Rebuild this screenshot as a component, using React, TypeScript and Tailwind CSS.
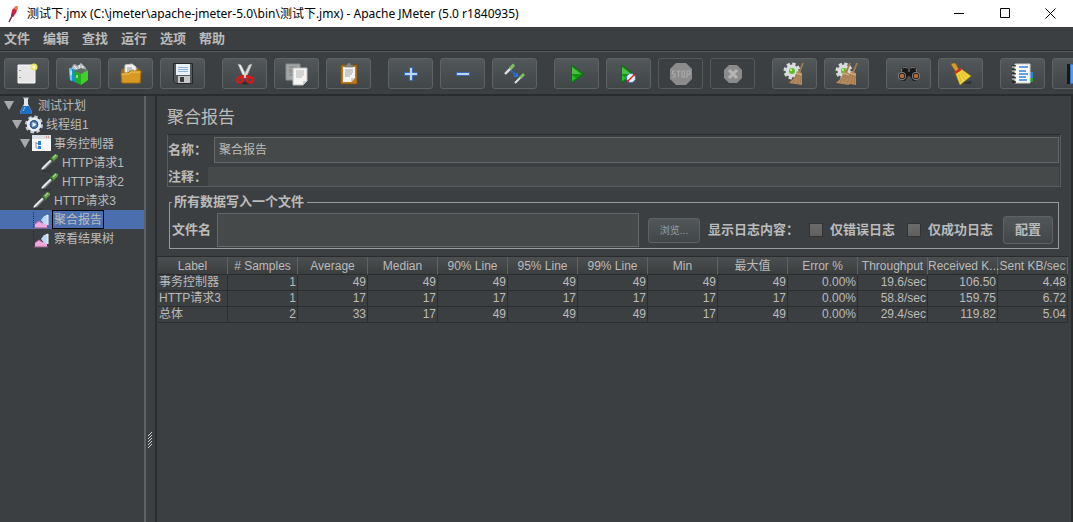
import { useState } from "react";
import type { ReactNode } from "react";
import clsx from "clsx";

/* ---------- toolbar icons ---------- */

function Icon({ children }: { children: ReactNode }) {
  return (
    <svg viewBox="0 0 24 24" className="size-6" aria-hidden="true">
      {children}
    </svg>
  );
}

const NewIcon = () => (
  <Icon>
    <path d="M3 3h17v18H3z" fill="#e6e6e6" stroke="#fafafa" />
    <path d="M5 8v1M5 15v1" stroke="#555" />
    <circle cx="19" cy="5" r="3.500" fill="#efe36a" />
    <circle cx="19" cy="5" r="1.500" fill="#fffde0" />
  </Icon>
);

const TemplatesIcon = () => (
  <Icon>
    <path d="M4 7l3-5 4 2 3-3 4 4 2 4-8 3z" fill="#b9bfc2" stroke="#8b9296" />
    <path d="M7 4l3 3M12 3l1 4M16 4l-1 4" stroke="#eef1f2" />
    <path d="M2 6l8 2v13l-7-3z" fill="#1592d8" />
    <path d="M2 6l3 1v12l-2-1z" fill="#6cc6f4" />
    <path d="M7 9l7 3v11l-6-3z" fill="#1fae1f" />
    <path d="M14 12l7-4v10l-7 5z" fill="#43cf2a" />
    <path d="M7 9l7-3 7 2-7 4z" fill="#5f6b62" />
    <path d="M4 9v4M10 13v3" stroke="#fff" />
  </Icon>
);

const OpenIcon = () => (
  <Icon>
    <path d="M2 8l3-2h14l2 2v12H2z" fill="#a36f10" />
    <path d="M6 3l7-1 4 3v9H6z" fill="#f3f3f3" stroke="#c9c9c9" />
    <path d="M8 6h5M8 8h7M8 10h7" stroke="#8e8e8e" />
    <path d="M2 11h7l2-2h11l-1 12H3z" fill="#d89a22" stroke="#a8720f" />
    <path d="M3 12h7l2-2h9" stroke="#f3c763" fill="none" />
  </Icon>
);

const SaveIcon = () => (
  <Icon>
    <path d="M2.500 1.500h19v20h-17l-2-2z" fill="#55585b" stroke="#242627" />
    <path d="M5 2h14v11H5z" fill="#e8f1fa" />
    <path d="M7 5.500h10M7 7.500h10M7 9.500h10" stroke="#8eb0d5" />
    <path d="M7 14h12v7H7z" fill="#c6c7c8" />
    <path d="M9 15h4v5H9z" fill="#393b3d" />
  </Icon>
);

const CutIcon = () => (
  <Icon>
    <ellipse cx="12" cy="21" rx="7" ry="1.500" fill="#2c2f30" />
    <path d="M5 2l3 1 6 12-3 1z" fill="#f3f3f3" stroke="#a9a9a9" strokeWidth=".6" />
    <path d="M19 2l-3 1-6 12 3 1z" fill="#dcdcdc" stroke="#a9a9a9" strokeWidth=".6" />
    <path d="M11 14l-4 1M13 14l4 1" stroke="#e01818" strokeWidth="2.400" />
    <circle cx="7" cy="18" r="2.700" fill="none" stroke="#df1717" strokeWidth="2.200" />
    <circle cx="17" cy="18" r="2.700" fill="none" stroke="#df1717" strokeWidth="2.200" />
  </Icon>
);

const CopyIcon = () => (
  <Icon>
    <path d="M1 2h14v16H1z" fill="#a4a7a8" stroke="#8a8d8e" />
    <path d="M4 5h8M4 8h5M4 10h4M4 13h4" stroke="#7b7e80" />
    <path d="M8 6h14v13l-4 4H8z" fill="#f4f4f3" stroke="#bdbdbd" />
    <path d="M11 9h8M11 11h8M11 13h8M11 15h6" stroke="#b5b5b5" />
    <path d="M22 19l-4 4v-4z" fill="#c9c9c9" />
  </Icon>
);

const PasteIcon = () => (
  <Icon>
    <path d="M4 3h16v19H4z" fill="#c07d1c" stroke="#7e5010" />
    <path d="M6 5h12v11l-4 4H6z" fill="#f5f5f5" />
    <path d="M8 8h8M8 10h8M8 12h7M8 14h5" stroke="#a2a2a2" />
    <path d="M18 16l-4 4v-4z" fill="#cfcfcf" />
    <path d="M8 5V3h2l1-2h2l1 2h2v2z" fill="#8b8d87" stroke="#5f615c" strokeWidth=".6" />
  </Icon>
);

const PlusIcon = () => (
  <Icon>
    <path d="M10.500 5.500h3v5h5v3h-5v5h-3v-5h-5v-3h5z" fill="#bcd5f1" stroke="#3568b4" />
  </Icon>
);

const MinusIcon = () => (
  <Icon>
    <path d="M5.500 10.500h13v3h-13z" fill="#bcd5f1" stroke="#3568b4" />
  </Icon>
);

const ToggleIcon = () => (
  <Icon>
    <path d="M2 12l8-8" stroke="#dfe3e3" strokeWidth="2.400" />
    <path d="M7 7l4-4.500" stroke="#7fbf62" strokeWidth="3" />
    <path d="M12 21l8-8" stroke="#dfe3e3" strokeWidth="2" />
    <path d="M17 16l4-4" stroke="#7fbf62" strokeWidth="2.600" />
    <path d="M8 9l5 4" stroke="#1e73ee" strokeWidth="2" strokeDasharray="2 1" />
    <path d="M15 10v5h-5z" fill="#1e73ee" />
  </Icon>
);

const PlayShape = () => (
  <>
    <path d="M6.500 3l12 9-12 9z" fill="#129412" stroke="#0b6d10" />
    <path d="M7 5l9 7H7z" fill="#4cbf44" />
    <path d="M7 19l4-3-4-3z" fill="#23c423" />
  </>
);

const StartIcon = () => (
  <Icon>
    <PlayShape />
  </Icon>
);

const StartNoTimersIcon = () => (
  <Icon>
    <g transform="translate(-2 0)">
      <PlayShape />
    </g>
    <circle cx="14" cy="16" r="4.500" fill="#eef3fb" stroke="#4674bb" />
    <path d="M10 20l8-8" stroke="#d92323" strokeWidth="1.500" />
  </Icon>
);

const StopIcon = () => (
  <Icon>
    <path d="M7 1h10l6 6v10l-6 6H7l-6-6V7z" fill="#8b8b8b" />
    <path
      d="M6 9H3.500v3H6v3H3M7.500 9h4M9.500 9v6M13 9h2.500v6H13zM18 16V9h3v3.500h-3"
      fill="none"
      stroke="#aaa"
      strokeWidth="1.200"
    />
  </Icon>
);

const ShutdownIcon = () => (
  <Icon>
    <path d="M8 3h8l5 5v8l-5 5H8l-5-5V8z" fill="#8b8b8b" />
    <path d="M8 8l8 8M16 8l-8 8" stroke="#b5b5b5" strokeWidth="3" />
  </Icon>
);

const GearShape = () => (
  <>
    <circle cx="9" cy="9" r="7" fill="none" stroke="#d7dadb" strokeWidth="3" strokeDasharray="3.300 2.198" />
    <circle cx="9" cy="9" r="6.500" fill="#dadddd" />
    <circle cx="9" cy="9" r="3" fill="#5fbd26" />
    <circle cx="8" cy="8" r="1.200" fill="#b4ea80" />
  </>
);

const BroomShape = () => (
  <>
    <path d="M20 1l-4 10" stroke="#a67b4d" strokeWidth="1.800" />
    <path d="M14 9l5 2v12L6 21l5-5z" fill="#b58b5e" />
    <path d="M14 13l-4 8M16 13l-2 9M18 14l-1 8" stroke="#94704a" strokeWidth=".7" />
    <path d="M13 11l6 2" stroke="#d3b086" />
  </>
);

const ClearIcon = () => (
  <Icon>
    <GearShape />
    <BroomShape />
  </Icon>
);

const ClearAllIcon = () => (
  <Icon>
    <GearShape />
    <g transform="translate(-5 0)">
      <BroomShape />
    </g>
    <g transform="translate(2 0)">
      <BroomShape />
    </g>
  </Icon>
);

const SearchIcon = () => (
  <Icon>
    <path d="M4 8l3-4 3 1 1 3h2l1-3 3-1 3 4 3 6-2 4-5 1-3-5h-2l-3 5-5-1-2-4z" fill="#181818" />
    <path d="M6 6l2-1 2 1M14 6l2-1 2 1M11 9h2M4 10l1-3M20 10l-1-3" fill="none" stroke="#8d8d8d" />
    <circle cx="5" cy="14" r="4" fill="#8a8d8f" />
    <circle cx="19" cy="14" r="4" fill="#8a8d8f" />
    <circle cx="5" cy="14" r="3.200" fill="#2a211c" />
    <circle cx="19" cy="14" r="3.200" fill="#2a211c" />
    <circle cx="5" cy="14" r="2.300" fill="#b16a3a" />
    <circle cx="19" cy="14" r="2.300" fill="#b16a3a" />
  </Icon>
);

const SearchResetIcon = () => (
  <Icon>
    <path d="M12 21l9 1 2-3z" fill="#2d3031" />
    <path d="M2 2l3-1 2 1 3 6-3 2-4-6z" fill="#dc9a32" stroke="#9a6417" strokeWidth=".6" />
    <path d="M6 10l6-3 10 7-11 9z" fill="#f1d33c" stroke="#b99416" strokeWidth=".6" />
    <path d="M10 12l2 8M12 11l4 7M13 10l5 5" stroke="#d3b02b" strokeWidth=".8" />
    <path d="M6 11l6-4" stroke="#d42a20" strokeWidth="2.600" />
  </Icon>
);

const FunctionHelperIcon = () => (
  <Icon>
    <path d="M19 10h3v6h-3z" fill="#2f83e0" />
    <path d="M19 16h3v4h-3z" fill="#18a427" />
    <path d="M4 2h15v19H4z" fill="#fbfbfb" stroke="#cfcfcf" />
    <path d="M8 5h9M8 9h7M8 12h9M8 15h7M8 18h8" stroke="#2f83e0" strokeWidth="1.400" />
    <path d="M1 4h4M1 8h4M1 12h4M1 16h4M1 20h4" stroke="#202020" strokeWidth="1.400" />
    <path d="M1 5h4M1 9h4M1 13h4M1 17h4" stroke="#eee" />
  </Icon>
);

const HelpIcon = () => (
  <Icon>
    <path d="M4 2h16v20H4z" fill="#3873c4" />
    <path d="M4 2h3v20H4z" fill="#15181c" />
    <path d="M8 3h12v18H8z" fill="#5d99e2" />
  </Icon>
);

/* ---------- tree icons ---------- */

const FlaskIcon = () => (
  <svg viewBox="0 0 20 19" className="h-[19px] w-5 shrink-0" aria-hidden="true">
    <path d="M8 2h4v6l4 8-1 2H5l-1-2 4-8z" fill="#dfe8ef" />
    <path d="M7 10h6l3 6-1 2H5l-1-2z" fill="#1b6fc4" />
    <path d="M9 11l-2 4" stroke="#82bdf0" />
    <path d="M7 2h6" stroke="#b5bdc2" />
  </svg>
);

const GearIcon = () => (
  <svg viewBox="0 0 20 19" className="h-[19px] w-5 shrink-0" aria-hidden="true">
    <circle cx="10" cy="9.500" r="7.500" fill="none" stroke="#c3cbd6" strokeWidth="3" strokeDasharray="3.400 2.490" />
    <circle cx="10" cy="9.500" r="5.700" fill="none" stroke="#e8edf2" strokeWidth="3" />
    <circle cx="10" cy="9.500" r="4.200" fill="#2d578f" />
    <circle cx="10" cy="9.500" r="3" fill="#5b87bd" />
    <path d="M8.500 7l4 2.500-4 2.500z" fill="#f2f6fc" />
  </svg>
);

const ControllerIcon = () => (
  <svg viewBox="0 0 20 19" className="h-[19px] w-5 shrink-0" aria-hidden="true">
    <path d="M0 1h19v16H0z" fill="#f7f8f9" />
    <path d="M0 1h19v4H0z" fill="#dbe0e5" />
    <path d="M14 3h1M16 3h1" stroke="#d94c3c" />
    <path d="M4 8v6h3M4 9.500h3" fill="none" stroke="#8a98a8" />
    <path d="M6 7h3v4H6zM6 12h3v3H6z" fill="#2e7fd0" />
  </svg>
);

const DropperIcon = () => (
  <svg viewBox="0 0 20 19" className="h-[19px] w-5 shrink-0" aria-hidden="true">
    <path d="M2 18h9" stroke="#2d3031" />
    <path d="M1 17l2-4 8-7 2 2-8 8z" fill="#8d9393" />
    <path d="M2 16l9-9" stroke="#f1f4f3" strokeWidth="1.600" />
    <path d="M10 5l4 4" stroke="#35632c" strokeWidth="2" />
    <path d="M11 5l4-4 3 1v2l-4 4z" fill="#5f9c4a" />
    <path d="M13 5l3-3" stroke="#a3d88c" strokeWidth="1.200" />
  </svg>
);

const ListenerIcon = () => (
  <svg viewBox="0 0 20 19" className="h-[19px] w-5 shrink-0" aria-hidden="true">
    <path d="M1.500 2v16" stroke="#29303a" strokeDasharray="1 1" />
    <path d="M3 18v-4l4-3 3 2 5 1v4z" fill="#f2a6dc" />
    <path d="M3 14l4-3 3 2" fill="none" stroke="#c86bb0" />
    <path d="M9 10l3-4 4-1v10l-4-1z" fill="#bcd9f5" />
    <path d="M14 6l2-1v10" fill="none" stroke="#f4faff" />
    <path d="M2 18h14" stroke="#8b5f83" />
  </svg>
);

/* ---------- data ---------- */

const MENU = ["文件", "编辑", "查找", "运行", "选项", "帮助"];

const TOOLBAR = [
  [
    { name: "新建", icon: NewIcon },
    { name: "模板", icon: TemplatesIcon },
    { name: "打开", icon: OpenIcon },
    { name: "保存", icon: SaveIcon },
  ],
  [
    { name: "剪切", icon: CutIcon },
    { name: "复制", icon: CopyIcon },
    { name: "粘贴", icon: PasteIcon },
  ],
  [
    { name: "展开", icon: PlusIcon },
    { name: "折叠", icon: MinusIcon },
    { name: "切换", icon: ToggleIcon },
  ],
  [
    { name: "启动", icon: StartIcon },
    { name: "不停顿启动", icon: StartNoTimersIcon },
    { name: "停止", icon: StopIcon, disabled: true },
    { name: "关闭", icon: ShutdownIcon, disabled: true },
  ],
  [
    { name: "清除", icon: ClearIcon },
    { name: "清除全部", icon: ClearAllIcon },
  ],
  [
    { name: "搜索", icon: SearchIcon },
    { name: "重置搜索", icon: SearchResetIcon },
  ],
  [
    { name: "函数助手", icon: FunctionHelperIcon },
    { name: "帮助", icon: HelpIcon },
  ],
];

const TREE = [
  { label: "测试计划", indent: "pl-1", icon: FlaskIcon, open: true },
  { label: "线程组1", indent: "pl-3", icon: GearIcon, open: true },
  { label: "事务控制器", indent: "pl-5", icon: ControllerIcon, open: true },
  { label: "HTTP请求1", indent: "pl-7", icon: DropperIcon },
  { label: "HTTP请求2", indent: "pl-7", icon: DropperIcon },
  { label: "HTTP请求3", indent: "pl-5", icon: DropperIcon },
  { label: "聚合报告", indent: "pl-5", icon: ListenerIcon },
  { label: "察看结果树", indent: "pl-5", icon: ListenerIcon },
];

const COLUMNS = [
  "Label",
  "# Samples",
  "Average",
  "Median",
  "90% Line",
  "95% Line",
  "99% Line",
  "Min",
  "最大值",
  "Error %",
  "Throughput",
  "Received K...",
  "Sent KB/sec",
];

const ROWS = [
  ["事务控制器", "1", "49", "49", "49", "49", "49", "49", "49", "0.00%", "19.6/sec", "106.50", "4.48"],
  ["HTTP请求3", "1", "17", "17", "17", "17", "17", "17", "17", "0.00%", "58.8/sec", "159.75", "6.72"],
  ["总体", "2", "33", "17", "49", "49", "49", "17", "49", "0.00%", "29.4/sec", "119.82", "5.04"],
];

const BUTTON = "rounded-[3px] border border-[#5e6263] bg-linear-to-b from-[#525759] to-[#414648]";
const FIELD = "min-w-0 flex-1 border border-[#646667] bg-[#45494a] outline-none";
const CHECKBOX =
  "size-[14px] appearance-none border border-[#333] bg-linear-to-b from-[#6b6b6b] to-[#606060] checked:bg-[#4b6eaf]";

/* ---------- sections ---------- */

function TitleBar() {
  return (
    <header className="flex h-[27px] items-center bg-white pl-1 text-black">
      <svg viewBox="0 0 16 20" className="h-5 w-4" aria-hidden="true">
        <path d="M5 18l3-6" stroke="#7a2a5c" strokeWidth="1.500" />
        <path d="M7 12l1-6 4-4 2 1-2 6-3 4z" fill="#cf2343" />
        <path d="M10 5l2-3 2 1-1 3z" fill="#f0843a" />
        <path d="M7 12l1-3 2 2-1 2z" fill="#8d2268" />
      </svg>
      <h1 className="flex-1 truncate pl-[7px] font-['Noto_Sans','Noto_Sans_CJK_SC',sans-serif] text-[12px] leading-4">
        测试下.jmx (C:\jmeter\apache-jmeter-5.0\bin\测试下.jmx) - Apache JMeter (5.0 r1840935)
      </h1>
      <button aria-label="最小化" className="flex h-6 w-[46px] items-center justify-center">
        <svg viewBox="0 0 11 11" className="size-[11px]" stroke="#000">
          <path d="M1 5.500h10" />
        </svg>
      </button>
      <button aria-label="最大化" className="flex h-6 w-[46px] items-center justify-center">
        <svg viewBox="0 0 11 11" className="size-[11px]" stroke="#000" fill="none">
          <path d="M1.500.500h9v9h-9z" />
        </svg>
      </button>
      <button aria-label="关闭窗口" className="flex h-6 w-[46px] items-center justify-center">
        <svg viewBox="0 0 11 11" className="size-[11px]" stroke="#000">
          <path d="M.5.500l10 10M10.500.500l-10 10" />
        </svg>
      </button>
    </header>
  );
}

function Toolbar() {
  return (
    <div className="flex h-[45px] shrink-0 gap-[17px] overflow-hidden border-t border-b-2 border-t-[#585858] border-b-[#292b2d] px-1 pt-[6px]">
      {TOOLBAR.map((group, i) => (
        <div key={i} className="flex shrink-0 gap-[7px]">
          {group.map(({ name, icon: ToolIcon, disabled }: any) => (
            <button
              key={name}
              aria-label={name}
              disabled={disabled}
              className={clsx(
                "flex h-[31px] w-[45px] items-center justify-center",
                disabled ? "rounded-[3px] border border-[#55595a]" : BUTTON,
              )}
            >
              <ToolIcon />
            </button>
          ))}
        </div>
      ))}
    </div>
  );
}

function Tree() {
  const [selected, setSelected] = useState(6);

  return (
    <ul role="tree" className="w-[146px] shrink-0 border-r-2 border-[#606364]">
      {TREE.map(({ label, indent, icon: NodeIcon, open }, i) => (
        <li
          key={label}
          role="treeitem"
          aria-selected={i === selected}
          onClick={() => setSelected(i)}
          className={clsx("flex h-[19px] items-center", indent, i === selected && "bg-[#4b6eaf]")}
        >
          <span className="w-3 shrink-0">
            {open && (
              <svg viewBox="0 0 10 9" className="h-[9px] w-[10px]" aria-hidden="true">
                <path d="M0 0h10L5 9z" fill="#a7a9aa" />
              </svg>
            )}
          </span>
          <NodeIcon />
          <span
            className={clsx(
              "border px-px pt-px leading-4 whitespace-nowrap",
              i === selected ? "border-black" : "border-transparent",
            )}
          >
            {label}
          </span>
        </li>
      ))}
    </ul>
  );
}

function NamePanel() {
  return (
    <div className="mx-[10px] flex flex-col gap-1 border border-[#5a5d5e] border-t-[#292b2d] pt-[2px] pr-px">
      <div className="flex h-[26px] items-center">
        <label htmlFor="name" className="w-[46px] shrink-0 text-[13px] font-bold">
          名称：
        </label>
        <input id="name" defaultValue="聚合报告" className={clsx(FIELD, "h-[26px] px-1 pb-[3px]")} />
      </div>
      <div className="flex h-[19px] items-center">
        <label htmlFor="comment" className="w-10 shrink-0 text-[13px] font-bold whitespace-nowrap">
          注释：
        </label>
        <input id="comment" className="h-[19px] min-w-0 flex-1 bg-[#45494a] px-1 outline-none" />
      </div>
    </div>
  );
}

function FilePanel() {
  return (
    <fieldset className="mx-3 mt-[7px] flex items-center border border-[#9a9a9a] pt-[3px] pr-[5px] pb-px pl-[2px] text-[13px] font-bold whitespace-nowrap">
      <legend className="pr-[3px] pl-[2px] leading-4">所有数据写入一个文件</legend>
      <label htmlFor="file" className="w-[45px] shrink-0">
        文件名
      </label>
      <input id="file" className={clsx(FIELD, "h-[34px] px-1 font-normal")} />
      <button className={clsx(BUTTON, "ml-[9px] h-[25px] w-[52px] text-[10px] font-normal text-[#9a9c9d]")}>
        浏览...
      </button>
      <span className="ml-2 w-[101px]">显示日志内容：</span>
      <input id="errors" type="checkbox" className={CHECKBOX} />
      <label htmlFor="errors" className="ml-[7px] w-[77px]">
        仅错误日志
      </label>
      <input id="successes" type="checkbox" className={CHECKBOX} />
      <label htmlFor="successes" className="ml-[7px] w-[75px]">
        仅成功日志
      </label>
      <button className={clsx(BUTTON, "h-7 w-[50px]")}>配置</button>
    </fieldset>
  );
}

function ResultTable() {
  return (
    <div className="mt-[7px] mr-[3px] border-t border-[#292b2d] pl-px">
      <table className="w-full table-fixed border-separate border-spacing-0">
        <thead>
          <tr className="h-[18px] bg-linear-to-b from-[#4b4f51] to-[#3a3d3e]">
            {COLUMNS.map((column) => (
              <th
                key={column}
                className="border-r border-b border-r-[#606364] border-b-[#292b2d] p-0 text-center leading-4 font-normal whitespace-nowrap"
              >
                {column}
              </th>
            ))}
          </tr>
        </thead>
        <tbody>
          {ROWS.map((row) => (
            <tr key={row[0]} className="h-4">
              {row.map((cell, i) => (
                <td
                  key={i}
                  className={clsx(
                    "border-r border-b border-[#2b2d2e] px-px py-0 leading-[15px] whitespace-nowrap",
                    i > 0 && "text-right",
                  )}
                >
                  {cell}
                </td>
              ))}
            </tr>
          ))}
        </tbody>
      </table>
    </div>
  );
}

export default function App() {
  return (
    <div className="flex h-screen flex-col overflow-hidden bg-[#3c3f41] font-['Liberation_Sans','Noto_Sans_CJK_SC',sans-serif] text-[12px] text-[#bbbbbb]">
      <TitleBar />
      <nav className="flex h-6 items-center gap-[13px] border-b border-[#292b2d] px-1 text-[13px] font-bold">
        {MENU.map((item) => (
          <button key={item}>{item}</button>
        ))}
      </nav>
      <Toolbar />
      <div className="flex min-h-0 flex-1">
        <Tree />
        {/* split pane divider */}
        <div className="flex w-[11px] shrink-0 flex-col items-center justify-end border-r-2 border-[#292b2d] pb-[74px]">
          <svg viewBox="0 0 5 16" className="h-4 w-[5px]" aria-hidden="true">
            <path d="M0 4l4-4M0 7l4-4M0 10l4-4M0 13l4-4M0 16l4-4" stroke="#d0d0d0" />
          </svg>
        </div>
        <main className="min-w-0 flex-1 border-r-2 border-[#292b2d]">
          <h2 className="pt-[10px] pb-1 pl-[10px] text-[17px] leading-6">聚合报告</h2>
          <NamePanel />
          <FilePanel />
          <ResultTable />
        </main>
      </div>
    </div>
  );
}
